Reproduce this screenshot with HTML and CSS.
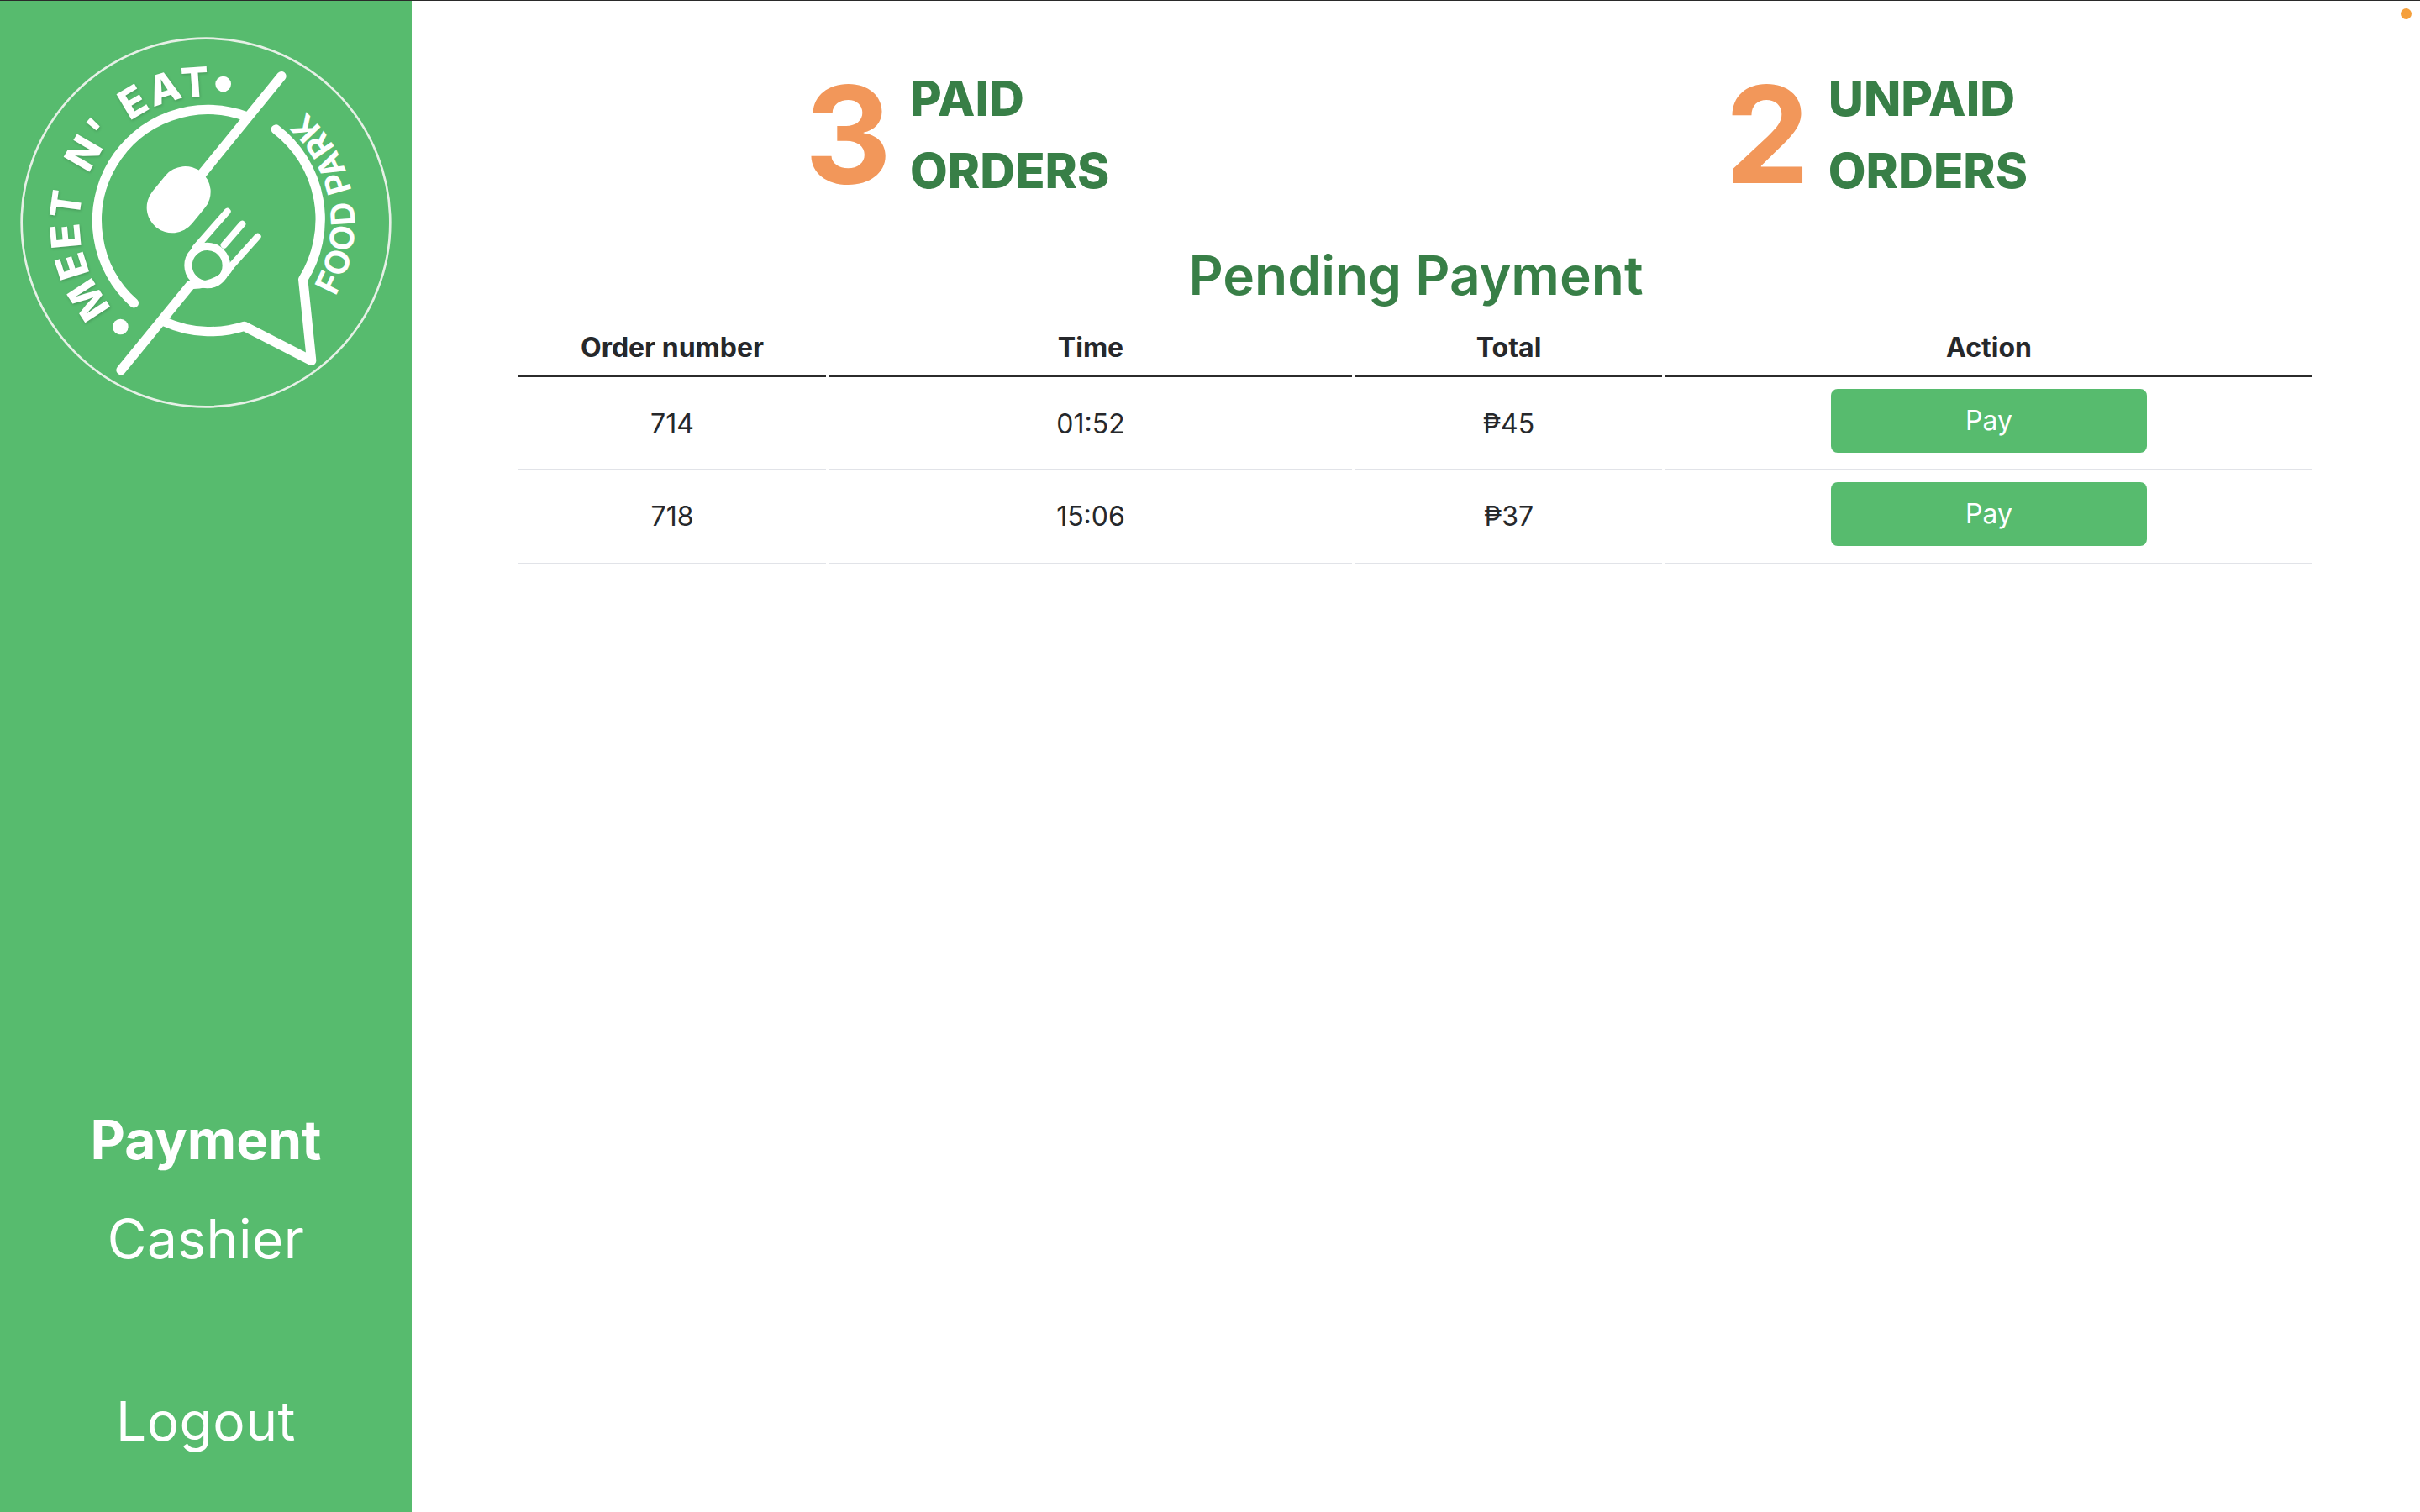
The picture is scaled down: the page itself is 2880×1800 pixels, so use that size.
FILE: index.html
```html
<!DOCTYPE html>
<html lang="en">
<head>
<meta charset="utf-8">
<title>Meet N' Eat - Payment</title>
<link rel="stylesheet" href="styles.css">
</head>
<body>
<div class="topline"></div>
<div class="app">
  <aside class="sidebar">
    <svg class="logo" viewBox="0 3 1470 1470" xmlns="http://www.w3.org/2000/svg">
      <defs>
        <path id="arc-top" d="M 402 1098 A 450 450 0 0 1 780 347"/>
        <path id="arc-right" d="M 1197 1058 A 532 532 0 0 0 1040 359"/>
      </defs>
      <circle class="ring" cx="735" cy="795" r="658"/>
      <text class="logo-title"><textPath href="#arc-top">MEET N' EAT</textPath></text>
      <text class="logo-sub"><textPath href="#arc-right">FOOD PARK</textPath></text>
      <circle class="dot" cx="797" cy="300" r="28"/>
      <circle class="dot" cx="430" cy="1167" r="28"/>
      <path class="stroke" d="M 874.5 414.3 A 396 396 0 0 0 478 1082.5"/>
      <path class="stroke bubble" d="M 590 1150 A 398 398 0 0 0 872 1165 L 1112 1288 L 1082 998 A 405 405 0 0 0 985 462"/>
      <path class="stroke" d="M 1005 272 L 720 622"/>
      <path class="spoon" d="M 615 741 L 661 685"/>
      <path class="stroke" d="M 432 1322 L 680 1018"/>
      <circle class="fork-ring" cx="740" cy="948" r="68"/>
      <path class="tine" d="M 812 755 L 698 885"/>
      <path class="tine" d="M 865 800 L 800 875"/>
      <path class="tine" d="M 920 845 L 826 950 Q 790 1015 690 1020"/>
    </svg>
    <nav class="nav">
      <a class="nav-item active">Payment</a>
      <a class="nav-item">Cashier</a>
      <a class="nav-item logout">Logout</a>
    </nav>
  </aside>
  <main class="main">
    <span class="status-dot"></span>
    <section class="stats">
      <div class="stat">
        <span class="stat-num">3</span>
        <span class="stat-label">PAID<br>ORDERS</span>
      </div>
      <div class="stat">
        <span class="stat-num">2</span>
        <span class="stat-label">UNPAID<br>ORDERS</span>
      </div>
    </section>
    <h1 class="title">Pending Payment</h1>
    <table class="orders">
      <thead>
        <tr>
          <th class="c1">Order number</th>
          <th class="c2">Time</th>
          <th class="c3">Total</th>
          <th class="c4">Action</th>
        </tr>
      </thead>
      <tbody>
        <tr>
          <td>714</td>
          <td>01:52</td>
          <td>₱45</td>
          <td class="action"><button class="pay">Pay</button></td>
        </tr>
        <tr class="last">
          <td>718</td>
          <td>15:06</td>
          <td>₱37</td>
          <td class="action"><button class="pay">Pay</button></td>
        </tr>
      </tbody>
    </table>
  </main>
</div>
</body>
</html>
```
FILE: styles.css
```css
* { box-sizing: border-box; }
html, body { margin: 0; height: 100%; }
body {
  display: flex;
  flex-direction: column;
  height: 1800px;
  overflow: hidden;
  background: #fff;
  color: #26282b;
  font-family: Inter, "Liberation Sans", sans-serif;
}
.topline { height: 1px; background: #2a2a2a; flex: none; }
.app { flex: 1; display: flex; min-height: 0; }

.sidebar {
  width: 490px;
  flex: none;
  background: #57bb6e;
  display: flex;
  flex-direction: column;
  align-items: center;
}
.logo { width: 490px; height: 490px; flex: none; }
.ring { fill: none; stroke: #e6f0e6; stroke-width: 8; }
.dot { fill: #fff; }
.stroke { fill: none; stroke: #fff; stroke-width: 34; stroke-linecap: round; }
.bubble { stroke-linejoin: round; }
.spoon { fill: none; stroke: #fff; stroke-width: 182; stroke-linecap: round; }
.fork-ring { fill: none; stroke: #fff; stroke-width: 28; }
.tine { fill: none; stroke: #fff; stroke-width: 24; stroke-linecap: round; }
.logo-title {
  fill: #fff;
  font-family: Inter, sans-serif;
  font-weight: 800;
  font-size: 146px;
  letter-spacing: 8.5px;
  word-spacing: 20px;
  filter: drop-shadow(2px 4px 4px rgba(0, 0, 0, 0.18));
}
.logo-sub {
  fill: #fff;
  font-family: Inter, sans-serif;
  font-weight: 700;
  font-size: 118px;
  letter-spacing: 5px;
}

.nav {
  margin-top: auto;
  padding-bottom: 49px;
  display: flex;
  flex-direction: column;
  align-items: center;
}
.nav-item { font-size: 64px; line-height: 118px; color: #fff; letter-spacing: 0.5px; }
.nav-item.active { font-weight: 700; letter-spacing: 0; }
.logout { margin-top: 99px; }

.main { flex: 1; position: relative; min-width: 0; }
.status-dot {
  position: absolute;
  top: 9px;
  right: 10px;
  width: 13px;
  height: 13px;
  border-radius: 50%;
  background: #f5a03c;
}
.stats {
  display: grid;
  grid-template-columns: 1fr 1fr;
  padding: 73px 100px 0 102px;
}
.stat { display: flex; justify-content: center; align-items: center; gap: 22px; }
.stat-num { font-size: 160px; line-height: 172px; font-weight: 700; color: #f2975a; }
.stat-label { font-size: 58px; line-height: 86px; font-weight: 800; color: #387f47; }
.title {
  margin: 34px 0 0;
  text-align: center;
  font-size: 64px;
  line-height: 96px;
  font-weight: 600;
  color: #387f47;
}
.orders {
  width: 2143px;
  margin: 0 0 0 123px;
  border-collapse: separate;
  border-spacing: 4px 0;
  table-layout: fixed;
  font-size: 32px;
}
.c1 { width: 366px; }
.c2 { width: 622px; }
.c3 { width: 365px; }
.c4 { width: 770px; }
.orders th {
  font-weight: 700;
  height: 73px;
  padding: 0 0 14px;
  vertical-align: bottom;
  border-bottom: 2px solid #2b2b2b;
}
.orders td {
  padding: 20px 0 19px;
  text-align: center;
  vertical-align: middle;
  border-bottom: 2px solid #e1e3e8;
}
.orders .last td { padding: 18px 0 20px; }
.orders td.action { padding-top: 14px; }
.pay {
  display: block;
  width: 376px;
  height: 76px;
  margin: 0 auto;
  padding: 0 0 2px;
  border: 0;
  border-radius: 8px;
  background: #57bb6e;
  color: #fff;
  font: 400 32px Inter, "Liberation Sans", sans-serif;
}
```
